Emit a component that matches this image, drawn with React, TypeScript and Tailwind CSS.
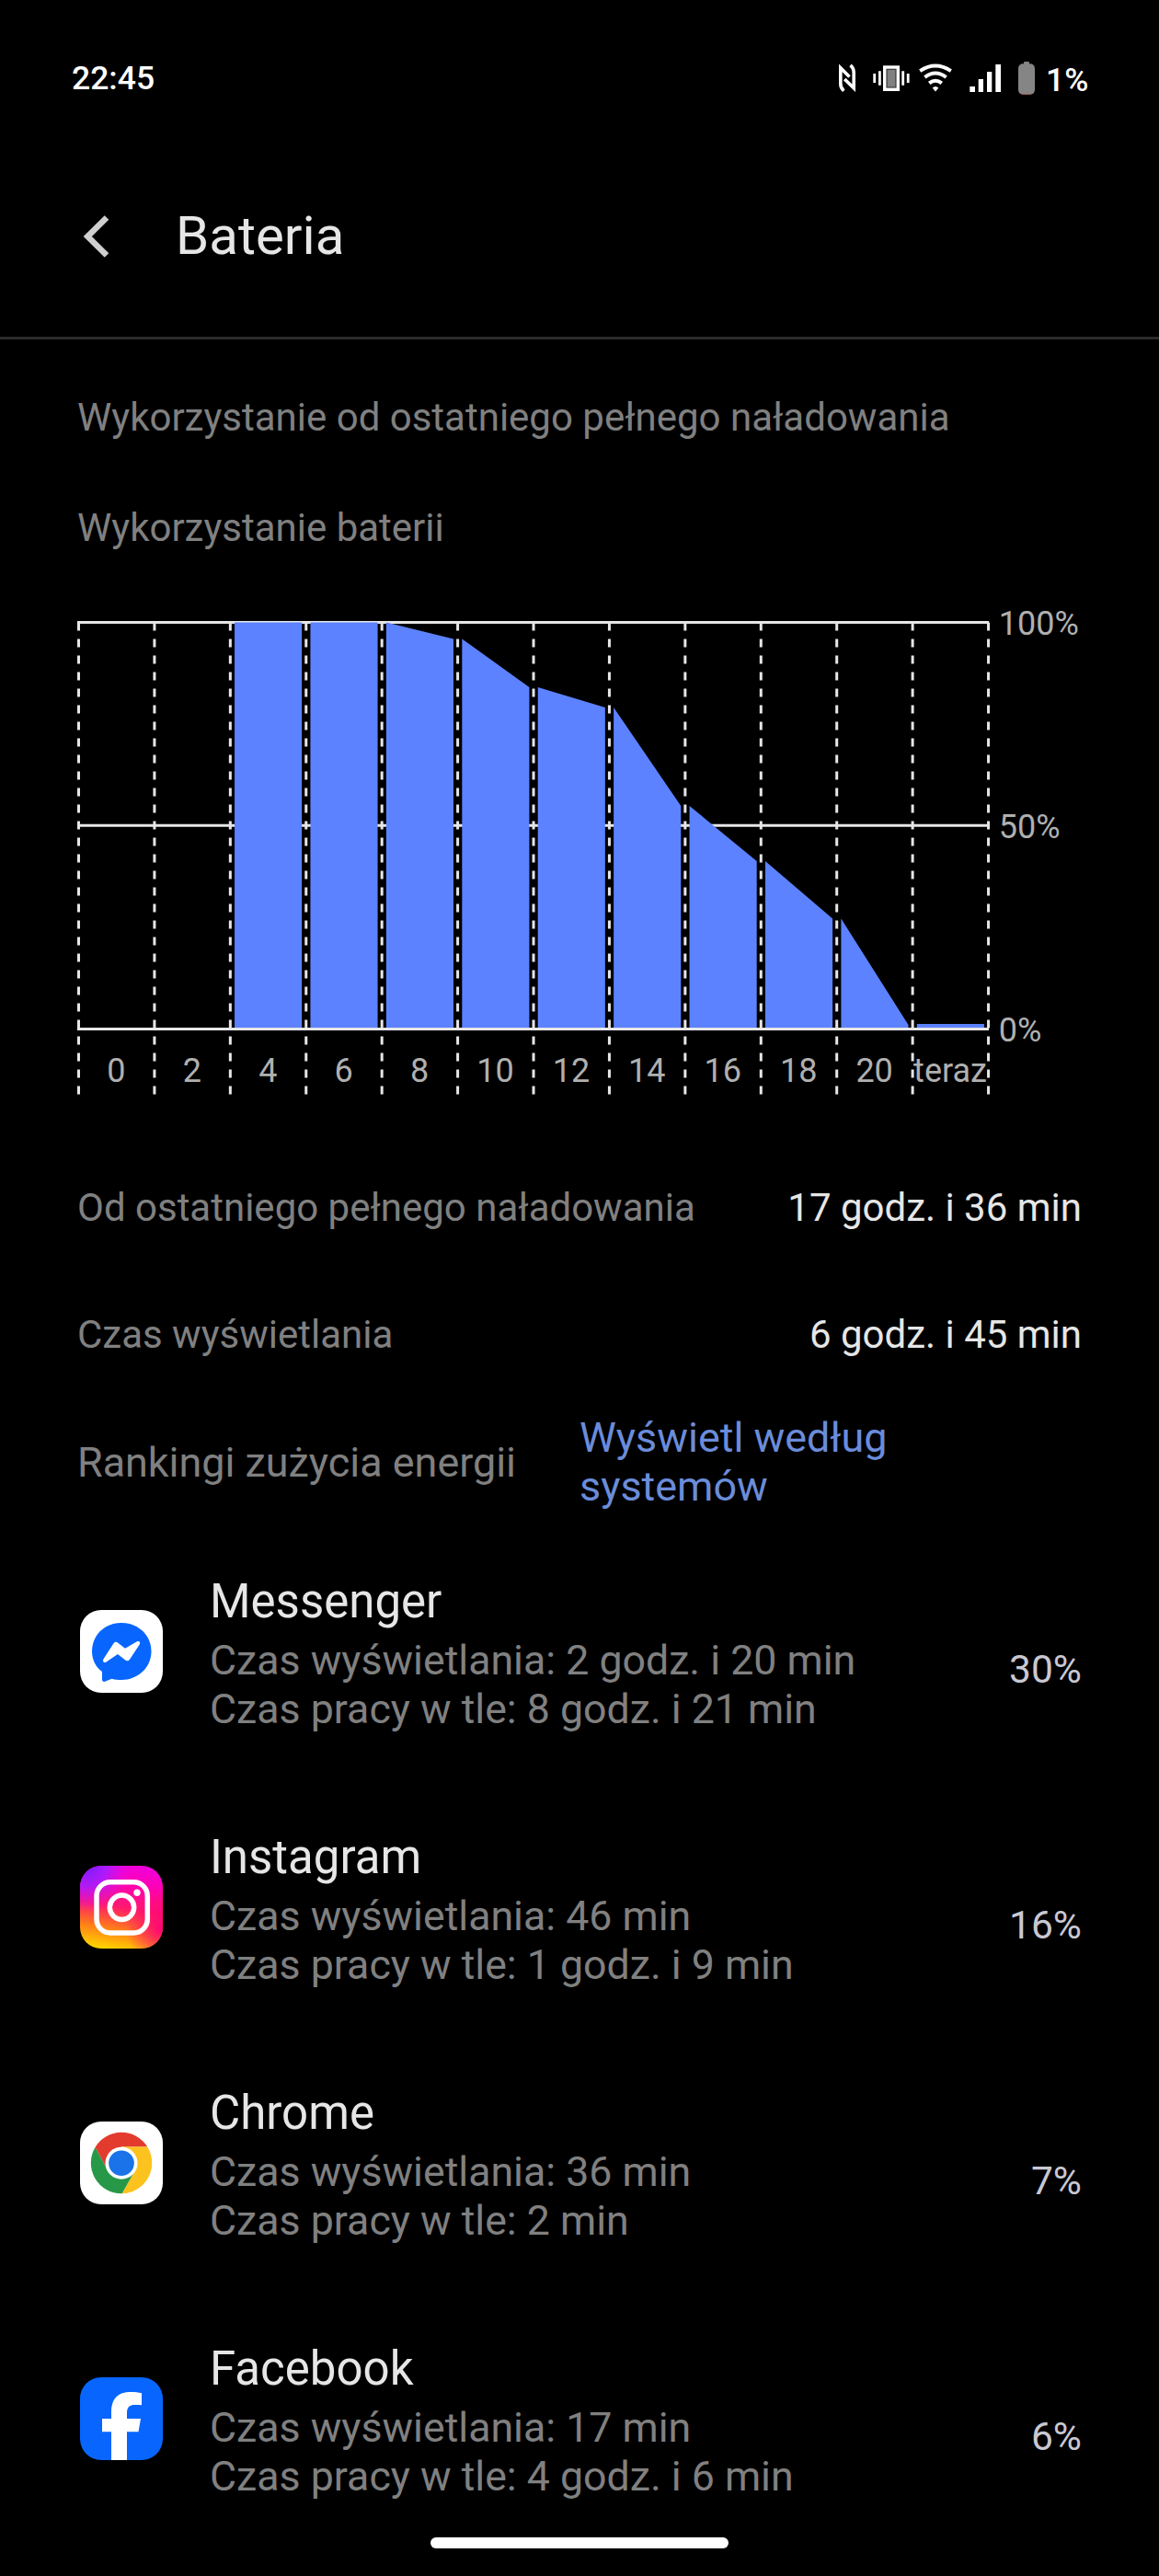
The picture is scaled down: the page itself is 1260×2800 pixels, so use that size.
import { useId } from "react";

type AppUsage = {
  name: string;
  screen: string;
  background: string;
  percent: string;
  Icon: () => React.ReactElement;
};

function MessengerIcon() {
  return (
    <svg viewBox="0 0 90 90" className="h-[90px] w-[90px]">
      <rect width="90" height="90" rx="23" fill="#fff" />
      <path
        d="M45 14C27 14 13 27 13 45C13 54 17 62 24 67V75.500C24 77.500 25.500 78.300 27 77.700L34.500 74.700C38 75.700 41.500 76 45 76C63 76 77.500 62.500 77.500 45C77.500 27 63 14 45 14Z"
        fill="#0866ff"
      />
      <path
        d="M25.500 53.200L36.500 36.200C37.700 34.400 39.500 34.200 41 35.500L49 41.700L61.500 34.400C64 33 66.300 34.700 64.700 37.400L54 53.700C52.700 55.400 51 55.700 49.300 54.400L41 48L28.500 56.400C26 58 24 55.700 25.500 53.200Z"
        fill="#fff"
      />
    </svg>
  );
}

function InstagramIcon() {
  const id = useId();

  return (
    <svg viewBox="0 0 90 90" className="h-[90px] w-[90px]">
      <defs>
        <linearGradient id={`${id}-base`} x1="0.38" y1="1" x2="0.55" y2="0">
          <stop offset="0" stopColor="#ffd000" />
          <stop offset="0.25" stopColor="#ff7a1a" />
          <stop offset="0.5" stopColor="#ff1a6c" />
          <stop offset="0.8" stopColor="#ff00b4" />
          <stop offset="1" stopColor="#f000d8" />
        </linearGradient>
        <radialGradient id={`${id}-violet`} cx="0.08" cy="0" r="0.55">
          <stop offset="0" stopColor="#7a1cff" />
          <stop offset="0.45" stopColor="#a81cff" stopOpacity="0.9" />
          <stop offset="1" stopColor="#e010f0" stopOpacity="0" />
        </radialGradient>
        <radialGradient id={`${id}-pink`} cx="1" cy="0.75" r="0.45">
          <stop offset="0" stopColor="#ff0078" />
          <stop offset="1" stopColor="#ff0078" stopOpacity="0" />
        </radialGradient>
      </defs>
      <rect width="90" height="90" rx="23" fill={`url(#${id}-base)`} />
      <rect width="90" height="90" rx="23" fill={`url(#${id}-pink)`} />
      <rect width="90" height="90" rx="23" fill={`url(#${id}-violet)`} />
      <rect x="18" y="17.700" width="55.300" height="55.300" rx="15" fill="none" stroke="#fff" strokeWidth="5.500" />
      <circle cx="45.500" cy="45.300" r="13.200" fill="none" stroke="#fff" strokeWidth="5.500" />
      <circle cx="62" cy="29.300" r="3.700" fill="#fff" />
    </svg>
  );
}

function ChromeIcon() {
  return (
    <svg viewBox="0 0 90 90" className="h-[90px] w-[90px]">
      <rect width="90" height="90" rx="23" fill="#fff" />
      <path d="M16.500 28A33.200 33.200 0 0 1 73.300 27.600L45 27.600L30.300 53.500Z" fill="#e33b2e" />
      <path d="M73.300 27.600A33.200 33.200 0 0 1 45.600 78.200L59.700 53.500L45 27.600Z" fill="#fcc31e" />
      <path d="M16.500 28A33.200 33.200 0 0 0 45.600 78.200L59.700 53.500L30.300 53.500Z" fill="#279847" />
      <circle cx="45" cy="45.200" r="17.500" fill="#fff" />
      <circle cx="45" cy="45.200" r="13.800" fill="#1a73e8" />
    </svg>
  );
}

function FacebookIcon() {
  return (
    <svg viewBox="0 0 90 90" className="h-[90px] w-[90px]">
      <rect width="90" height="90" rx="23" fill="#0866ff" />
      <path
        d="M34 90V59.300H24V45H34V38.500C34 23 41 16 55.500 16C59 16 64 16.300 67 17.300V30.200C65 30 62.500 29.900 60 29.900C53.500 29.900 51 32.500 51 39V45H66L63.500 59.300H51V90Z"
        fill="#fff"
      />
    </svg>
  );
}

const apps: AppUsage[] = [
  {
    name: "Messenger",
    screen: "2 godz. i 20 min",
    background: "8 godz. i 21 min",
    percent: "30%",
    Icon: MessengerIcon,
  },
  {
    name: "Instagram",
    screen: "46 min",
    background: "1 godz. i 9 min",
    percent: "16%",
    Icon: InstagramIcon,
  },
  {
    name: "Chrome",
    screen: "36 min",
    background: "2 min",
    percent: "7%",
    Icon: ChromeIcon,
  },
  {
    name: "Facebook",
    screen: "17 min",
    background: "4 godz. i 6 min",
    percent: "6%",
    Icon: FacebookIcon,
  },
];

const hours = ["0", "2", "4", "6", "8", "10", "12", "14", "16", "18", "20", "teraz"];

// y of the bar's top at its left and right edge, by column
const bars = [
  { column: 2, from: 1.5, to: 1.5 },
  { column: 3, from: 1.5, to: 1.5 },
  { column: 4, from: 1.5, to: 19.5 },
  { column: 5, from: 19.5, to: 72 },
  { column: 6, from: 72, to: 94 },
  { column: 7, from: 94, to: 201 },
  { column: 8, from: 201, to: 261 },
  { column: 9, from: 261, to: 323.5 },
  { column: 10, from: 323.5, to: 439 },
  { column: 11, from: 438, to: 438 },
];

const STEP = 82.42;

function StatusBar() {
  return (
    <header className="flex h-[170px] items-start pl-[78px] text-white">
      <span className="mt-[60px] w-[830px] text-[35.5px] font-medium leading-[50px]">22:45</span>
      <svg viewBox="0 0 220 50" className="mt-[60px] h-[50px] w-[220px]">
        <g fill="none" stroke="#fff" strokeWidth="3.600">
          <path d="M9.300 38.800Q5.800 35.500 5.800 31V13.800L15.500 23.500" />
          <path d="M16.500 10.800Q20.200 14 20.200 19V35.800L10.200 26" />
        </g>
        <rect x="53.700" y="13" width="14.600" height="24.300" fill="#404040" stroke="#fff" strokeWidth="3.400" />
        <rect x="56.700" y="16" width="8.600" height="18.300" fill="#808080" />
        <path d="M42.700 20V30M48.400 17.300V32.700M73.700 17.300V32.700M79.200 20V30" stroke="#fff" strokeWidth="2.800" />
        <g fill="none" stroke="#fff" strokeWidth="3.900">
          <path d="M92.200 17.200Q109 6 125.800 17.200" />
          <path d="M97.400 24Q109 15 120.600 24" />
          <path d="M102.200 30.400Q109 25 115.800 30.400" />
        </g>
        <path d="M105.700 35.500Q109 32.500 112.300 35.500L109 39.500Z" fill="#fff" />
        <path d="M146.300 34H152V40H146.300ZM155.700 26H161V40H155.700ZM165 18H170.300V40H165ZM174.300 10H180V40H174.300Z" fill="#fff" />
        <rect x="205" y="7" width="6" height="5" rx="1" fill="#858585" />
        <rect x="199" y="9.300" width="18" height="33.400" rx="5" fill="#858585" />
        <path d="M203 42.400H213" stroke="#b05a5a" strokeWidth="0.800" />
      </svg>
      <span className="ml-[9px] mt-[62px] text-[35.5px] font-medium leading-[50px]">1%</span>
    </header>
  );
}

function BatteryChart() {
  return (
    <div className="ml-[84px] mt-[71px] h-[516px] w-[1100px]">
      <svg viewBox="0 0 1100 516" className="h-[516px] w-[1100px] overflow-visible">
        <path d="M0 1.500H991M0 222.300H991" stroke="#e6e6e6" strokeWidth="3" />
        {bars.map(({ column, from, to }) => {
          const left = 1.5 + column * STEP + 4.7;
          const right = 1.5 + (column + 1) * STEP - 4.6;
          return (
            <path key={column} d={`M${left} ${from}L${right} ${to}V442H${left}Z`} fill="#5c82ff" />
          );
        })}
        {Array.from({ length: 13 }, (_, i) => (
          <path
            key={i}
            d={`M${1.5 + i * STEP} 1.500V515`}
            stroke="#e6e6e6"
            strokeWidth="3"
            strokeDasharray="9 9"
          />
        ))}
        <path d="M0 443.500H991" stroke="#e6e6e6" strokeWidth="3" />
        <g fill="#b0b0b0" fontSize="36">
          {hours.map((hour, i) => (
            <text key={hour} x={1.2 + (i + 0.5) * STEP} y="501" textAnchor="middle">
              {hour}
            </text>
          ))}
          <text x="1001.700" y="15">100%</text>
          <text x="1001.700" y="236">50%</text>
          <text x="1001.700" y="457">0%</text>
        </g>
      </svg>
    </div>
  );
}

function SummaryRow({ label, value }: { label: string; value: string }) {
  return (
    <div className="flex h-[138px] items-center justify-between px-[84px] text-[42px]">
      <span className="text-[#808080]">{label}</span>
      <span className="text-[#e6e6e6]">{value}</span>
    </div>
  );
}

function AppRow({ app }: { app: AppUsage }) {
  const { Icon } = app;

  return (
    <div className="flex h-[278px] items-start pl-[87px] pr-[84px]">
      <div className="mt-[50px]">
        <Icon />
      </div>
      <div className="ml-[51px] flex-1">
        <p className="mt-[11px] text-[51px] leading-[60px] text-[#e6e6e6]">{app.name}</p>
        <p className="mt-[8px] text-[44.7px] leading-[53px] text-[#808080]">
          Czas wyświetlania: {app.screen}
        </p>
        <p className="text-[44.7px] leading-[53px] text-[#808080]">
          Czas pracy w tle: {app.background}
        </p>
      </div>
      <span className="mt-[85px] text-[42.5px] leading-[60px] text-[#c9c8d2]">{app.percent}</span>
    </div>
  );
}

export default function App() {
  return (
    <div className="relative h-[2800px] w-[1260px] overflow-hidden bg-black font-[Roboto,sans-serif]">
      <StatusBar />

      <div className="flex h-[199px] items-start border-b-[3px] border-[#2a2a2a]">
        <svg viewBox="0 0 30 48" className="ml-[90px] mt-[63px] h-[48px] w-[30px]">
          <path d="M26 3.500L5.300 24L26 44.500" fill="none" stroke="#cfcfcf" strokeWidth="6.500" />
        </svg>
        <h1 className="ml-[71px] mt-[51px] text-[58.2px] leading-[70px] text-[#e6e6e6]">Bateria</h1>
      </div>

      <p className="ml-[84px] mt-[55px] text-[42px] leading-[60px] text-[#808080]">
        Wykorzystanie od ostatniego pełnego naładowania
      </p>
      <p className="ml-[84px] mt-[60px] text-[42px] leading-[60px] text-[#808080]">
        Wykorzystanie baterii
      </p>

      <BatteryChart />

      <div className="mt-[52px]">
        <SummaryRow label="Od ostatniego pełnego naładowania" value="17 godz. i 36 min" />
        <SummaryRow label="Czas wyświetlania" value="6 godz. i 45 min" />
      </div>

      <div className="flex h-[140px] items-center pl-[84px] text-[44.9px] leading-[53px]">
        <span className="text-[#808080]">Rankingi zużycia energii</span>
        <span className="ml-[69px] w-[420px] text-[#6b8cda]">Wyświetl według systemów</span>
      </div>

      <div className="mt-[41px]">
        {apps.map((app) => (
          <AppRow key={app.name} app={app} />
        ))}
      </div>

      <div className="absolute bottom-[30px] left-[468px] h-[12px] w-[324px] rounded-full bg-white" />
    </div>
  );
}
